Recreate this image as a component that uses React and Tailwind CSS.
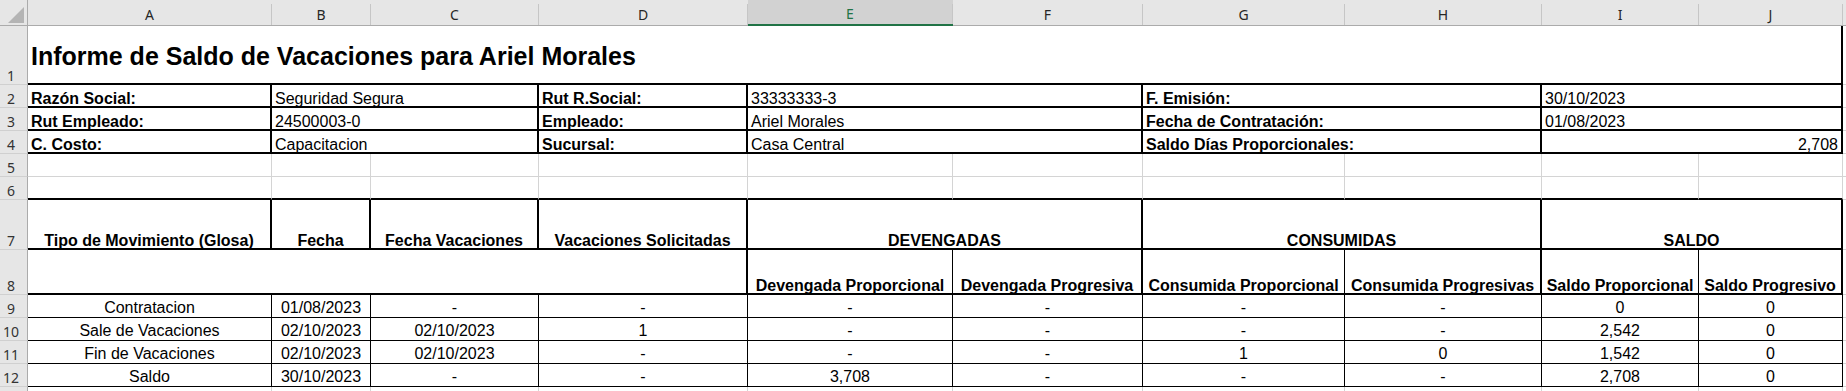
import React from "react";
import clsx from "clsx";

// Excel-like sheet: "Informe de Saldo de Vacaciones"

const RIGHT = {
  g: "border-r border-r-[#d4d4d4]",
  t: "border-r border-r-black",
  T: "border-r-2 border-r-black",
  n: "",
};

const BOTTOM = {
  g: "border-b border-b-[#d4d4d4]",
  t: "border-b border-b-black",
  T: "border-b-2 border-b-black",
  n: "",
};

const SPAN = { 1: "", 2: "col-span-2", 4: "col-span-4", 10: "col-span-10" };
const ALIGN = { l: "justify-start", c: "justify-center", r: "justify-end" };

function Cell({ span = 1, r = "g", b = "g", a = "l", bold, lead = "leading-[18px]", className, children }) {
  return (
    <div
      className={clsx(
        "flex items-end whitespace-nowrap px-[3px] text-[16px] text-black",
        SPAN[span],
        RIGHT[r],
        BOTTOM[b],
        ALIGN[a],
        bold && "font-bold",
        lead,
        className
      )}
    >
      {children}
    </div>
  );
}

function RowHead({ n }) {
  return (
    <div className="flex items-end justify-center pr-[5px] bg-[#e6e6e6] border-r border-r-[#ababab] border-b border-b-[#d0d0d0] font-['Noto_Sans',sans-serif] text-[14px] leading-[16px] text-[#333333]">
      {n}
    </div>
  );
}

function ColHead({ letter, selected }) {
  return (
    <div
      className={clsx(
        "pt-[4px]",
        selected ? "bg-[#d2d2d2] border-b-2 border-b-[#217346]" : "bg-[#e6e6e6] border-b border-b-[#ababab]"
      )}
    >
      <div
        className={clsx(
          "h-full flex items-center justify-center border-r border-r-[#c6c6c6] font-['Noto_Sans',sans-serif] text-[14px] leading-[16px]",
          selected ? "text-[#217346]" : "text-[#262626]"
        )}
      >
        {letter}
      </div>
    </div>
  );
}

const Gap = () => <div className="border-b border-b-[#d4d4d4]" />;

const infoRows = [
  ["Razón Social:", "Seguridad Segura", "Rut R.Social:", "33333333-3", "F. Emisión:", "30/10/2023"],
  ["Rut Empleado:", "24500003-0", "Empleado:", "Ariel Morales", "Fecha de Contratación:", "01/08/2023"],
  ["C. Costo:", "Capacitacion", "Sucursal:", "Casa Central", "Saldo Días Proporcionales:", "2,708"],
];

const movimientos = [
  ["Contratacion", "01/08/2023", "-", "-", "-", "-", "-", "-", "0", "0"],
  ["Sale de Vacaciones", "02/10/2023", "02/10/2023", "1", "-", "-", "-", "-", "2,542", "0"],
  ["Fin de Vacaciones", "02/10/2023", "02/10/2023", "-", "-", "-", "1", "0", "1,542", "0"],
  ["Saldo", "30/10/2023", "-", "-", "3,708", "-", "-", "-", "2,708", "0"],
];

const letters = ["A", "B", "C", "D", "E", "F", "G", "H", "I", "J"];
const thick = "leading-[15px]";

export default function App() {
  return (
    <div className="w-full h-[391px] overflow-hidden bg-white">
      <div className="grid grid-cols-[28px_244px_99px_168px_209px_205px_190px_202px_197px_157px_144px_1fr] grid-rows-[26px_59px_23px_23px_23px_23px_23px_50px_45px_23px_23px_23px_23px_23px] font-['Liberation_Sans',Arial,sans-serif]">

        {/* column headers */}
        <div className="flex items-end justify-end pr-[3px] pb-[2px] bg-[#e6e6e6] border-r border-r-[#ababab] border-b border-b-[#ababab]">
          <svg width="16" height="16" viewBox="0 0 16 16">
            <polygon points="16,0 16,16 0,16" fill="#b4b4b4" />
          </svg>
        </div>
        {letters.map((l) => (
          <ColHead key={l} letter={l} selected={l === "E"} />
        ))}
        <div className="bg-[#e6e6e6] border-b border-b-[#ababab]" />

        {/* row 1: title */}
        <RowHead n="1" />
        <Cell span={10} r="T" b="T" bold lead="leading-[28px]" className="text-[25px] pb-[13px]">
          Informe de Saldo de Vacaciones para Ariel Morales
        </Cell>
        <Gap />

        {/* rows 2-4: datos */}
        {infoRows.map((row, i) => (
          <React.Fragment key={i}>
            <RowHead n={String(i + 2)} />
            <Cell r="T" b="T" bold lead={thick}>{row[0]}</Cell>
            <Cell span={2} r="T" b="T" lead={thick}>{row[1]}</Cell>
            <Cell r="T" b="T" bold lead={thick}>{row[2]}</Cell>
            <Cell span={2} r="T" b="T" lead={thick}>{row[3]}</Cell>
            <Cell span={2} r="T" b="T" bold lead={thick}>{row[4]}</Cell>
            <Cell span={2} r="T" b="T" a={i === 2 ? "r" : "l"} lead={thick}>{row[5]}</Cell>
            <Gap />
          </React.Fragment>
        ))}

        {/* rows 5-6: vacías */}
        <RowHead n="5" />
        {letters.map((l) => (
          <Cell key={l} />
        ))}
        <Gap />
        <RowHead n="6" />
        {letters.map((l) => (
          <Cell key={l} b="T" />
        ))}
        <Gap />

        {/* row 7: encabezados */}
        <RowHead n="7" />
        <Cell r="T" b="T" a="c" bold lead={thick}>Tipo de Movimiento (Glosa)</Cell>
        <Cell r="T" b="T" a="c" bold lead={thick}>Fecha</Cell>
        <Cell r="T" b="T" a="c" bold lead={thick}>Fecha Vacaciones</Cell>
        <Cell r="T" b="T" a="c" bold lead={thick}>Vacaciones Solicitadas</Cell>
        <Cell span={2} r="T" b="T" a="c" bold lead={thick}>DEVENGADAS</Cell>
        <Cell span={2} r="T" b="T" a="c" bold lead={thick}>CONSUMIDAS</Cell>
        <Cell span={2} r="T" b="T" a="c" bold lead={thick}>SALDO</Cell>
        <Gap />

        {/* row 8: sub-encabezados */}
        <RowHead n="8" />
        <Cell span={4} r="T" b="T" lead={thick} />
        <Cell r="t" b="T" a="c" bold lead={thick}>Devengada Proporcional</Cell>
        <Cell r="T" b="T" a="c" bold lead={thick}>Devengada Progresiva</Cell>
        <Cell r="t" b="T" a="c" bold lead={thick}>Consumida Proporcional</Cell>
        <Cell r="T" b="T" a="c" bold lead={thick}>Consumida Progresivas</Cell>
        <Cell r="t" b="T" a="c" bold lead={thick}>Saldo Proporcional</Cell>
        <Cell r="T" b="T" a="c" bold lead={thick}>Saldo Progresivo</Cell>
        <Gap />

        {/* rows 9-12: movimientos */}
        {movimientos.map((row, i) => (
          <React.Fragment key={i}>
            <RowHead n={String(i + 9)} />
            {row.map((v, j) => (
              <Cell key={j} r="t" b="t" a="c">{v}</Cell>
            ))}
            <Gap />
          </React.Fragment>
        ))}

        {/* row 13 (only its top edge is visible) */}
        <RowHead n="" />
        {letters.map((l) => (
          <Cell key={l} />
        ))}
        <Gap />
      </div>
    </div>
  );
}
